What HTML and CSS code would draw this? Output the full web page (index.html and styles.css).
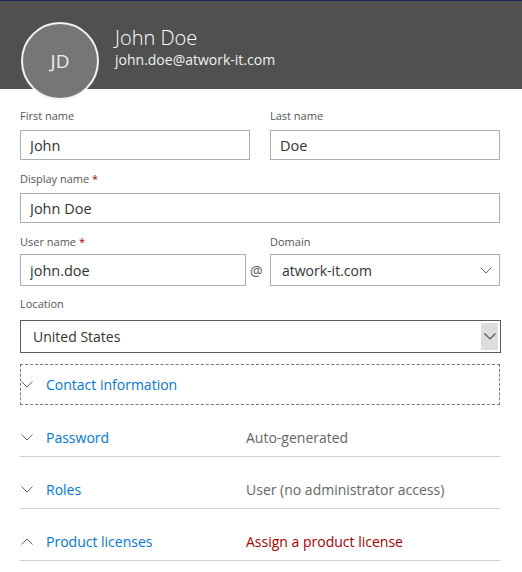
FILE: index.html
```html
<!DOCTYPE html>
<html lang="en">
<head>
  <meta charset="UTF-8" />
  <title>Add user</title>
  <link rel="stylesheet" href="styles.css">
</head>
<body>
  <div class="user-header">
    <div class="avatar">JD</div>
    <div class="user-info">
      <div class="user-name">John Doe</div>
      <div class="user-email">john.doe@atwork-it.com</div>
    </div>
  </div>

  <form class="user-form">
    <div class="row">
      <div class="field">
        <label>First name</label>
        <input type="text" value="John">
      </div>
      <div class="field">
        <label>Last name</label>
        <input type="text" value="Doe">
      </div>
    </div>

    <div class="field">
      <label>Display name <span class="req">*</span></label>
      <input type="text" value="John Doe">
    </div>

    <div class="row user-row">
      <div class="field">
        <label>User name <span class="req">*</span></label>
        <div class="at-wrap">
          <input type="text" value="john.doe">
          <span class="at">@</span>
        </div>
      </div>
      <div class="field">
        <label>Domain</label>
        <div class="select domain">
          <span>atwork-it.com</span>
          <svg class="chev" width="12" height="7" viewBox="0 0 12 7"><path d="M0.5 0.5 L6 6 L11.5 0.5" fill="none" stroke="#666" stroke-width="1"/></svg>
        </div>
      </div>
    </div>

    <div class="field location">
      <label>Location</label>
      <div class="select country">
        <span>United States</span>
        <div class="arrow-box">
          <svg width="12" height="7" viewBox="0 0 12 7"><path d="M0.5 0.5 L6 6 L11.5 0.5" fill="none" stroke="#555" stroke-width="1.2"/></svg>
        </div>
      </div>
    </div>

    <div class="section focused">
      <svg class="toggle" width="12" height="7" viewBox="0 0 12 7"><path d="M0.5 0.5 L6 6 L11.5 0.5" fill="none" stroke="#666" stroke-width="1"/></svg>
      <span class="section-title">Contact information</span>
    </div>

    <div class="section">
      <svg class="toggle" width="12" height="7" viewBox="0 0 12 7"><path d="M0.5 0.5 L6 6 L11.5 0.5" fill="none" stroke="#666" stroke-width="1"/></svg>
      <span class="section-title">Password</span>
      <span class="section-value">Auto-generated</span>
    </div>

    <div class="section">
      <svg class="toggle" width="12" height="7" viewBox="0 0 12 7"><path d="M0.5 0.5 L6 6 L11.5 0.5" fill="none" stroke="#666" stroke-width="1"/></svg>
      <span class="section-title">Roles</span>
      <span class="section-value">User (no administrator access)</span>
    </div>

    <div class="section">
      <svg class="toggle" width="12" height="7" viewBox="0 0 12 7"><path d="M0.5 6.5 L6 1 L11.5 6.5" fill="none" stroke="#666" stroke-width="1"/></svg>
      <span class="section-title">Product licenses</span>
      <span class="section-value warn">Assign a product license</span>
    </div>
  </form>
</body>
</html>
```
FILE: styles.css
```css
body {
  margin: 0;
  font-family: "Open Sans", "Noto Sans", sans-serif;
  background: #fff;
  color: #333;
  border-top: 1px solid #1f2b5c;
}

.user-header {
  height: 88px;
  background: #505050;
  display: flex;
  align-items: flex-start;
  padding-left: 21px;
}

.avatar {
  width: 74px;
  height: 74px;
  margin-top: 21px;
  border: 2px solid #f2f2f2;
  border-radius: 50%;
  background: #767676;
  color: #eee;
  font-size: 19px;
  display: flex;
  align-items: center;
  justify-content: center;
  flex-shrink: 0;
}

.user-info {
  margin-left: 16px;
  padding-top: 23px;
  color: #fff;
}

.user-name {
  font-size: 20px;
  line-height: 27px;
  font-weight: 300;
}

.user-email {
  font-size: 14px;
  line-height: 18px;
  color: #f0f0f0;
}

.user-form {
  width: 480px;
  margin: 0 0 0 20px;
  padding-top: 19px;
}

.row {
  display: grid;
  grid-template-columns: 230px 230px;
  column-gap: 20px;
}

.field {
  margin-bottom: 11px;
}

.field label {
  display: block;
  font-size: 11px;
  line-height: 16px;
  color: #555;
  margin-bottom: 6px;
}

.user-row .field label {
  margin-bottom: 4px;
}

.req {
  color: #a80000;
}

.field input {
  box-sizing: border-box;
  width: 100%;
  height: 30px;
  margin: 0;
  border: 1px solid #a6b1b1;
  padding: 0 9px;
  font-family: inherit;
  font-size: 14.5px;
  color: #333;
  background: #fff;
  outline: none;
}

.at-wrap {
  display: flex;
  align-items: center;
}

.at-wrap input {
  height: 32px;
}

.at {
  flex-shrink: 0;
  width: 0;
  margin-left: 4px;
  font-size: 14px;
  color: #555;
}

.user-row .field {
  margin-bottom: 10px;
}

.select {
  box-sizing: border-box;
  display: flex;
  align-items: center;
  justify-content: space-between;
  background: #fff;
  font-size: 14px;
  color: #333;
}

.domain {
  height: 32px;
  border: 1px solid #a6b1b1;
  padding: 0 7px 0 11px;
}

.location {
  margin-bottom: 11px;
}

.location label {
  margin-bottom: 8px;
}

.country {
  width: 481px;
  height: 33px;
  border: 1px solid #5a5a5a;
  padding: 2px 2px 2px 12px;
}

.arrow-box {
  width: 17px;
  align-self: stretch;
  background: #ddd;
  display: flex;
  align-items: center;
  justify-content: center;
}

.section {
  display: flex;
  align-items: flex-end;
  height: 52px;
  padding-bottom: 9px;
  box-sizing: border-box;
  border-bottom: 1px solid #d0d0d0;
  font-size: 14px;
  line-height: 18px;
}

.section.focused {
  height: 41px;
  padding-bottom: 0;
  align-items: center;
  border: 1px dashed #777;
}

.toggle {
  flex-shrink: 0;
  margin: 0 13px 6px 1px;
}

.focused .toggle {
  margin: 0 13px 0 0;
}

.section-title {
  width: 200px;
  color: #0078d7;
}

.section-value {
  color: #666;
}

.section-value.warn {
  color: #a80000;
}
```
